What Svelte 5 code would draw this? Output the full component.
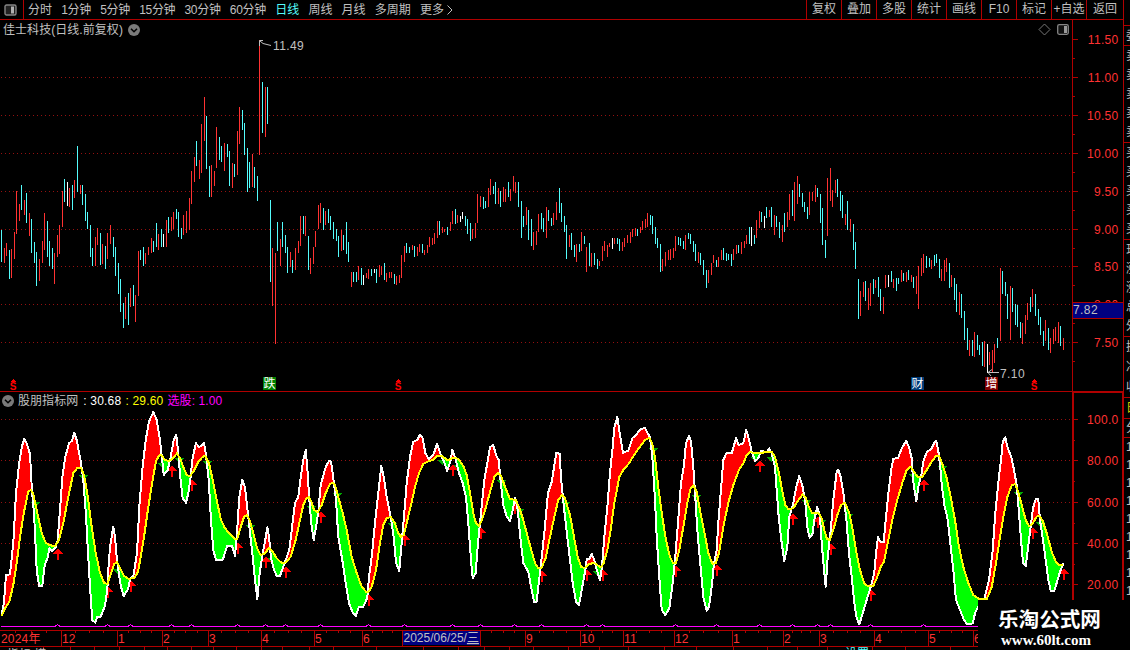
<script lang="ts">
  // Daily K-line screen: toolbar, price bars, trend oscillator and time axis.
  // Both charts share one pixel coordinate space (the window's own), so bar
  // and curve data are stored as screen coordinates.

  const periods = ['分时', '1分钟', '5分钟', '15分钟', '30分钟', '60分钟', '日线', '周线', '月线', '多周期', '更多'];
  const actions = ['复权', '叠加', '多股', '统计', '画线', 'F10', '标记', '+自选', '返回'];

  // ── price bars: x,top,bottom ──
  const up = `4,248,263 6,243,256 11,249,278 14,232,259 16,191,234 19,204,221 24,200,215 29,213,236 39,259,281 42,241,263
    44,213,250 54,253,284 57,235,257 59,225,254 62,191,227 69,188,207 74,180,198 80,185,194 95,237,266 97,228,245
    102,244,264 107,233,259 110,225,244 125,297,319 130,288,307 135,295,322 138,251,296 145,253,264 148,247,255 151,238,253
    158,234,250 166,220,247 171,217,231 173,212,229 183,215,235 186,211,233 189,198,230 191,171,204 194,157,182 199,160,179
    201,124,173 204,97,141 211,165,197 214,171,186 216,127,168 224,143,171 232,163,188 237,131,175 239,107,144 252,154,187
    259,40,155 265,87,137 272,248,306 275,253,344 280,239,266 290,252,267 295,248,270 298,241,253 300,216,246 305,216,236
    310,258,274 313,247,264 315,231,247 318,205,229 320,203,223 325,211,225 341,230,251 351,272,287 358,266,280 366,273,278
    368,269,279 379,265,277 381,266,275 386,273,282 389,272,278 391,272,278 396,276,285 399,275,283 401,255,278 404,246,262
    412,245,250 417,247,256 419,244,252 424,250,255 427,245,253 429,237,247 432,238,245 434,233,244 437,221,238 442,227,233
    444,229,232 450,222,231 452,211,224 457,215,223 472,229,239 475,223,238 477,194,223 480,196,207 488,188,207 490,179,195
    498,188,204 503,187,202 505,189,202 510,189,201 513,176,191 515,182,193 526,207,225 533,232,250 536,231,245 538,214,232
    546,207,238 553,213,225 556,202,220 569,235,247 576,244,262 581,232,251 586,247,272 591,253,267 599,261,266 602,246,261
    604,241,251 607,245,257 609,243,247 614,238,244 622,242,251 624,238,247 627,235,243 630,232,243 632,229,237 635,228,236
    640,227,233 642,221,230 645,219,228 647,213,227 662,259,271 665,252,266 668,250,260 670,249,260 673,248,258 675,236,251
    685,235,250 698,252,263 708,270,283 711,263,275 713,255,263 718,257,267 721,250,260 733,249,260 736,245,254 741,242,254
    744,241,248 746,235,244 756,220,238 759,211,228 769,210,217 774,215,235 782,225,242 787,212,227 789,194,220 794,182,221
    797,176,204 809,192,215 812,192,201 815,185,202 827,178,236 830,168,201 832,190,207 835,180,193 845,214,225 850,219,232
    860,291,316 863,282,297 868,288,310 870,283,306 875,280,288 883,297,314 885,275,288 893,279,288 901,270,282 906,272,282
    911,275,282 916,276,294 918,266,309 921,258,276 923,254,273 931,260,269 941,269,281 944,260,281 946,258,272 951,275,287
    959,292,315 969,340,356 974,332,357 984,341,367 989,352,365 992,350,372 994,344,363 1000,268,341 1010,286,340
    1022,323,344 1025,315,334 1027,303,320 1032,289,307 1045,320,341 1050,338,353 1053,329,344 1055,327,341 1058,322,343 1063,338,350`;

  const down = `1,230,262 9,250,279 21,185,210 26,193,223 31,219,253 34,242,263 36,252,286 47,221,257 49,241,266 52,248,269
    64,179,202 72,185,210 77,146,192 82,185,205 85,194,221 87,212,229 90,225,257 92,248,266 100,233,265 105,246,269
    113,237,257 115,247,276 118,263,294 120,279,312 123,303,328 128,293,325 133,285,306 140,250,260 143,247,266 153,241,252
    156,223,247 161,229,247 168,217,233 176,209,219 178,212,237 181,228,239 196,141,166 206,116,169 209,166,197 219,137,160
    221,146,162 227,144,157 229,151,186 234,164,177 242,110,130 244,123,155 247,148,192 249,162,188 254,167,188 257,176,201
    262,82,133 267,87,124 270,200,282 277,222,251 282,222,247 285,235,253 287,247,273 292,260,273 303,216,234 308,236,270
    323,208,230 328,209,223 330,216,230 333,222,239 336,229,241 338,236,257 343,235,250 346,222,254 348,242,262 353,272,282
    356,272,282 361,268,285 371,269,276 376,269,283 384,263,280 394,274,284 406,243,253 409,247,253 414,246,257 422,244,253
    439,221,235 447,227,235 455,209,224 465,216,226 467,219,234 470,223,241 483,197,209 485,201,208 493,186,194 495,182,204
    500,191,207 508,182,197 518,182,207 521,201,238 523,216,227 528,210,240 531,219,246 541,213,229 543,218,232 548,210,221
    551,218,226 559,188,213 561,203,222 564,216,232 566,225,259 571,233,250 574,245,257 579,244,252 584,236,244 589,243,266
    594,253,265 597,259,269 617,238,244 619,239,251 637,229,236 650,215,225 652,216,234 655,227,244 657,238,248 660,244,272
    678,237,245 680,238,246 683,241,249 688,233,239 690,234,244 693,241,252 695,244,261 700,253,265 703,260,275 706,270,288
    716,260,267 723,248,260 726,253,261 728,254,260 731,254,266 738,245,253 749,227,244 754,235,244 761,212,222 766,207,218
    771,207,227 776,216,227 779,222,238 784,213,232 792,190,216 799,184,197 802,193,207 804,202,212 807,207,219 817,188,197
    820,194,223 822,208,245 825,240,258 837,179,197 840,191,211 842,195,218 847,201,230 853,224,250 855,242,269 858,279,319
    865,281,301 873,279,294 878,277,297 880,289,311 891,271,282 896,278,291 898,278,284 903,273,281 908,270,280 913,277,288
    926,256,268 929,258,267 934,255,266 936,254,263 939,259,278 949,263,288 954,278,300 956,284,312 961,294,318 964,311,340
    967,328,350 972,340,356 977,335,350 979,345,355 982,342,366 997,338,348 1002,271,294 1005,282,296 1007,294,319
    1012,288,312 1015,304,325 1017,305,327 1020,322,338 1030,297,312 1035,294,316 1038,309,325 1040,317,335 1043,331,346
    1048,328,350 1060,326,346`;

  const flat = `67,182,206 163,234,247 363,275,285 374,269,273 460,216,222 462,212,219 612,238,249 751,227,246 764,216,228
    888,275,287 987,344,373`;

  // ── oscillator curves: x,y knots ──
  const fastKnots = `1.7,615 4,602 6,575 10,574.3 13.3,543 16,493 19.3,462 22,446 24.3,439 26.3,442 30,454 31,472 32,492 34,513
    35,533 36.7,570 39,585.7 42.3,585.7 44.7,565 48,556.7 49.3,548.3 52,550.7 55.3,548.3 57.7,540 60,510 62.3,478 65,458
    69,443.3 72,440.7 74.3,432.7 76.7,440 81,463 83.3,480 86,515 88,553 90.7,597 92.3,620 95.3,622.7 97.3,616.7 100.7,616.7
    105,605.7 107.3,590 108.3,570 110,547 113.3,526.7 115,536.7 116.7,557 118.7,573 121,586.7 123.7,596 128,589.3 130,579.3
    133.3,576 137,553.3 139.3,507 142.3,470 145.7,440 149,421.7 153.3,412 156.7,420 160,440 162,458.3 163.7,475 167.7,470
    170.7,457 173.7,440 176.3,435 178.3,453.3 180.3,476.7 182.7,498.3 186,502.7 188.3,493.3 190.3,480 192.7,457 196,443.3
    199.3,447.3 204,442.7 206,455 208.7,480 211,520 213.3,550 216,560 222.7,560 227.3,545.7 232,545.7 235,555.7 237,533
    239.3,497 242.3,480 245,487 247,505 250,533 252.3,553 254.7,577 257.3,599 259.7,573 262.7,553 265,541.7 267.3,527.3
    269,536.7 271,558.3 274,570 276.7,575.7 280,575.7 284.7,563 289.3,550 291.7,530 295,503 298.3,497 300.7,478 303.3,460
    305.7,450 307.7,473 309.3,500 311.7,527 313.7,540 316,527 318.3,512 320.7,485 325.7,467 329,461 331,461.7 333.3,478
    336,500 338.3,537 342.3,560 345.7,583 349,603 352.3,611.7 355.7,616 358.7,607.3 363.3,606.7 367.3,598 369,577
    371.7,557 375,523 378.3,493 381.3,466 384,478 386.7,497 391,518 393.7,537 396,563 399.3,571 401.3,547 404,517
    406.7,483 410,457 413.3,441.7 417.3,440 420,434.7 422.7,438.3 425.3,453 428.7,459.3 433.3,455 437,444 440.3,453.3
    444,461.7 447.3,471 450.3,461.7 452.3,450 455.3,458 459,473 462.7,483 466,497 468.3,523 471,560 472.7,578.3
    475.7,573 478,543 481,513 484.3,480 487.3,463 490,447.3 493.3,445 496,455 498.7,460 500.7,482 503.3,505 506.7,516.7
    510,521 512.7,510 515.3,497.7 517.7,510 520.3,537 523.3,563 528.3,571.7 531.7,590 534,601.7 536.7,601.7 538.7,583
    540.7,567 544.3,533 548,493 551.7,482 556.3,452.7 559.7,454 561,478 564,508 567.3,537 570,560 572.7,583 576,601.7
    579,605 581.7,590 585.7,568 586.7,559.3 589.3,559.3 591.7,554 594,559.3 597.3,571.7 600,580 602,567 604.3,537
    607.7,503 610,473 612.7,447 614.3,428 617.3,416.7 619.7,433 623,452.7 628.3,450.7 632.3,438.3 636.7,434 640.7,428.7
    645.3,428.3 647.7,433.3 650,437.3 652.3,457 655,500 656.7,537 659.3,577 661.7,610 665.3,615.3 669.3,608.3 672.7,583
    675,560 678,523 681,483 683.7,467 686,443.3 689,436 691,441.7 693.3,467 695.3,497 697.3,530 700,560 703.3,597
    706.7,610.7 709,606.7 711.7,587 714,563.3 716.7,550 718.3,523 720.7,493 723.3,460 726.3,453.3 731.7,453.3 736,438.3
    738.7,445 743.3,443.3 746.3,430 748.7,438.3 751.7,451.7 755.3,461 758.3,458.3 761,450.7 766.7,452.3 769.3,448.3
    771.7,453.3 775,467 776.7,490 778.7,517 781.3,540 784.3,561 787.3,547 789.3,517 793.3,503 796,488 799.3,476
    802.7,487 805.3,503 807.7,530 809.7,537.7 812.3,535 814.7,518 817.3,507 820,517 821.7,543 824,570 825.7,586.7
    827.7,557 830.7,530 833.3,500 836.7,471.7 838.3,470 840.7,477 844,497 846.7,523 849,553 851.7,577 854.3,603
    856.7,618.3 859.3,624.3 862.7,613.3 866.7,600 870.7,587 874.3,573 876,553 878,537 880.7,542.3 883.7,542.3 886,517
    888.7,490 891.7,467 893.3,459 898.3,457.7 901.7,448.3 906.3,440.7 909.3,448.3 911.7,458.3 913,480 916.3,501
    918.7,485 921.3,475 923.7,460 927,451.7 931,449.3 934,443.3 936.3,441 938.7,453.3 940.3,468 942,487 944.7,507
    947.3,517 950,540 953.3,570 956,600 960.7,611.7 964,620 967.3,624.3 972.7,623.3 975,613.3 978,606.7 984.3,599.3
    989,580 992.7,550 995.3,513 998.3,483 1001.7,453.3 1002.7,441.7 1005.3,437.3 1007.7,448.3 1011.3,456.7 1014,470
    1016.7,485 1019,513 1021.3,543 1023,563 1025.7,566 1027.7,550 1030.7,527 1033,508 1035.7,499.3 1038.3,499.3
    1040,520 1043,540 1045.7,560 1048.3,580 1050.7,590.7 1054.3,590.7 1056.7,583 1060,571.7 1063.7,562.7`;

  const slowKnots = `1.7,616 5,608.3 9.3,601.7 13.3,585 16.7,563 20,537 24,512 28.3,491.7 31,490 33.3,494 37.3,513 41.7,533
    45.7,542.7 50,545.3 55,546 59,540 63.3,523 68.3,497 73.3,473 77.3,468 81,467.7 84,475 87.3,493 91.7,527 95.7,553
    100,573 104,582.7 107.3,584 111,573.3 114.3,564 117,562 120,568.3 124,576 128.3,578.7 134.3,578.3 138,571.7 140.7,557
    144,537 148.3,507 152.7,480 156,461 159.3,455.3 161.7,455.3 165,460 168.3,461 172.3,459 177,453.3 180,458.3 183.3,467
    186.7,475 189.7,476.3 193.3,471.7 198.3,461.7 202.7,456.7 205.3,456 209,463.3 212.3,478 216.7,500 221,520 225,528.3
    230,534 235,538.7 237.3,538.7 240.7,527 244,517 246.7,515 249.3,519 253.3,533 257,548 260.3,554.7 264.3,554.3
    269,547.7 272.7,551.7 276.7,558.3 281.7,563 286,562.3 290.7,556.7 295.7,540 300,520 303.3,505 306,499 308.7,497
    311.3,501.7 314,510 317.7,512.3 321.7,505 325.7,493 330,484 332.3,482.7 335,485 338.3,497 342.7,513 346.7,530
    351.7,557 356.7,573 361.7,586.7 366,591.7 368.7,591.7 371.7,586.7 376,570 380,543 383.3,525 386.7,518.3 391,517
    395,523.3 398.3,533 401,537 403.7,535 406.7,523 411,505 415,487 419,473 423.3,464 428.3,461.3 433.3,460 437.3,456
    441.7,456 447.7,460.3 453.3,457.7 458.3,458.7 463.3,466 466.7,475 470,493 473.3,513 476,523.3 478.7,526 482,520
    486,507 490,492 494.3,477 498.3,472.7 501.7,477.3 505,487 510,499 515.7,500 519,507 522.7,518 526.7,533 530.7,548
    535,563 538.3,568.3 541.7,567.7 545.7,558 550,537 554.3,517 558.3,500 562,495 565,498.3 570,515 574,537 577.7,557
    581,566.7 584.3,568 589,564.3 594,562.7 597.3,565 600.7,567.3 603.7,563.3 607.3,550 610.7,530 614,505 619.3,477
    623.3,470 629,463.3 634,455 640,446.7 645,440 649.3,438 652,442.7 655,457 658.3,487 662.3,517 666,540 670,557
    673.3,563.3 676,562.7 679.3,550 683.3,527 687.3,503 690.7,488 693.3,485.3 696.7,492 700,510 704,530 708.3,553
    712.3,563.7 715.7,563.3 719,553 723.3,527 728.3,503 733.3,485 739,470 743.3,463.3 746.7,455 750,452 754.3,453.3
    760,453.3 765.7,452 771.7,452 775,456.7 778.7,472 782.7,493 785.3,505 788.3,509 793.3,508.3 797.3,501.7 802.7,494.3
    806,498.3 809,507.3 812.3,513.3 818.3,512.7 821.7,518.3 824.3,530 827,539 829.7,540 833.3,530 837.3,515 841,505
    845,502.7 849.3,513 852.7,530 856,550 860,570 864.3,583.3 867.7,586 873.3,586 877.3,577 880.7,567 884,561.7
    888.3,540 892.7,518 897.3,500 902.3,483 906.7,470 910.7,466.7 914,471.7 917.7,477 922.3,476.7 926.7,470 931.7,461.7
    936,456 939,456 942.7,465 946.7,478 950.7,497 955,520 959,547 963.3,567 968.3,583 973.3,595 980,599.3 986.7,599.3
    991.7,587 996,563 1000,537 1003.3,517 1007.3,497 1011.7,485.3 1015,484 1018.3,492 1021.7,505 1025.7,520 1029,526
    1032.3,524 1036.7,516.7 1039.3,515.7 1042.3,520 1046.7,533 1051.7,551.7 1056,562.3 1059,565 1063.3,564.7`;

  const parse = (s: string) => s.trim().split(/\s+/).map((t) => t.split(',').map(Number));

  const barPath = (s: string) => parse(s).map(([x, a, b]) => `M${x} ${a}h1V${b}h-1z`).join('');

  function sample(knots: number[][], x: number) {
    const i = knots.findIndex((k) => k[0] >= x);
    if (i === 0) return knots[0][1];
    if (i < 0) return knots[knots.length - 1][1];
    const [x0, y0] = knots[i - 1];
    const [x1, y1] = knots[i];
    return y0 + ((y1 - y0) * (x - x0)) / (x1 - x0);
  }

  const fast = parse(fastKnots);
  const slow = parse(slowKnots);

  // one pixel column per x; red while fast is above slow, green below
  let redFill = '';
  let greenFill = '';
  for (let x = 2; x < 1064; x++) {
    const f = sample(fast, x + 0.5);
    const s = sample(slow, x + 0.5);
    const col = `M${x} ${f.toFixed(1)}h1V${s.toFixed(1)}h-1z`;
    if (f < s) redFill += col;
    else greenFill += col;
  }

  // buy signals: x, arrow tip y
  const buys = [
    [58, 548], [108, 586], [131, 580], [172, 465], [192, 479], [238, 542], [266, 556], [286, 566], [321, 511],
    [369, 594], [405, 534], [453, 464], [481, 527], [515, 502], [542, 570], [587, 569], [603, 569], [676, 565],
    [717, 564], [760, 460], [793, 513], [818, 516], [831, 543], [871, 589], [924, 479], [1033, 527], [1064, 568]
  ];
  const sells = [
    [35, 502], [83, 475], [117, 569], [162, 463], [179, 458], [207, 461], [250, 525], [271, 558], [311, 506],
    [337, 493], [392, 523], [442, 460], [456, 465], [501, 480], [519, 509], [565, 502], [597, 571], [653, 448],
    [696, 495], [755, 457], [771, 457], [806, 500], [821, 520], [848, 514], [913, 474], [942, 466], [1018, 492], [1040, 522]
  ];
  const signalLine =
    'M1 626.5' + buys.filter(([x]) => x < 978).map(([x]) => `H${x - 3}l2.5 -2l2.5 2`).join('') + 'H978';

  const prices = [
    ['11.50', 39], ['11.00', 77], ['10.50', 115], ['10.00', 153], ['9.50', 191],
    ['9.00', 229], ['8.50', 266], ['8.00', 304], ['7.50', 342]
  ] as [string, number][];
  const levels = [['100.0', 419], ['80.00', 460], ['60.00', 502], ['40.00', 543], ['20.00', 584]] as [string, number][];

  const months = [
    ['2024年', 0], ['12', 61], ['1', 117], ['2', 162], ['3', 208], ['4', 261], ['5', 314], ['6', 362], ['', 402], ['', 480],
    ['9', 525], ['10', 580], ['11', 623], ['12', 674], ['1', 732], ['2', 783], ['3', 819], ['4', 874], ['5', 928], ['6', 973]
  ] as [string, number][];
  const minorTicks = months.slice(0, -1).flatMap(([, x], i) => {
    const w = months[i + 1][1] - x;
    return [0.25, 0.5, 0.75].map((k) => Math.round(x + w * k));
  });
  const lowerTicks = [
    43, 70, 94, 119, 144, 167, 191, 213, 236, 261, 282, 309, 333, 376, 423, 458, 484, 509, 533, 568, 599, 628, 664,
    696, 733, 767, 797, 827, 872, 905, 950
  ];

  const dividends = [13, 398, 1034];
  const badges = [
    { x: 263, text: '跌', fill: '#008000' },
    { x: 911, text: '财', fill: '#003c78' },
    { x: 985, text: '增', fill: '#800000' }
  ];

  const quoteGroups = [
    { h: 20, rows: ['委'] },
    { h: 97, rows: ['卖', '卖', '卖', '卖', '卖'] },
    { h: 97, rows: ['买', '买', '买', '买', '买'] },
    { h: 97, rows: ['现', '涨', '涨', '总', '外'] },
    { h: 61, rows: ['换', '净', '收'] }
  ];
</script>

{#snippet more()}
  <svg class="more" width="12" height="12" viewBox="0 0 12 12">
    <circle cx="6" cy="6" r="6" fill="#7a7a7a" />
    <path d="M3 4.7L6 7.7L9 4.7" fill="none" stroke="#000" stroke-width="1.6" />
  </svg>
{/snippet}

<div class="screen">
  <div class="main">
    <header class="toolbar">
      <div class="pane-toggle">
        <svg width="13" height="12" viewBox="0 0 13 12">
          <rect x="1" y="1" width="11" height="10" rx="1.5" fill="#222" stroke="#858585" stroke-width="1.4" />
          <rect x="7" y="2.5" width="3" height="7" fill="#b0b0b0" />
        </svg>
      </div>
      <nav class="periods">
        {#each periods as p}
          <span class:active={p === '日线'} class:minutes={p.endsWith('分钟')}>{p}</span>
        {/each}
        <svg class="arrow" width="7" height="10" viewBox="0 0 7 10">
          <path d="M1.5 .5L6 5L1.5 9.5" fill="none" stroke="#c0c0c0" />
        </svg>
      </nav>
      <nav class="actions">
        {#each actions as a}
          <span>{a}</span>
        {/each}
      </nav>
    </header>

    <section class="panel">
      <div class="title">
        <span>佳士科技(日线.前复权)</span>
        {@render more()}
      </div>
      <svg width="1123" height="372" viewBox="0 20 1123 372">
        <g class="crisp">
          {#each prices.slice(1) as [, y]}
            <line class="grid" x1="1" x2="1072" y1={y + 0.5} y2={y + 0.5} />
          {/each}
          <path d={barPath(up)} fill="#ff3232" />
          <path d={barPath(down)} fill="#54fcfc" />
          <path d={barPath(flat)} fill="#fff" />
          <path class="frame" d="M0 391h1123v1h-1123zM1072 20h1v372h-1z" />
          {#each prices as [, y]}
            <path class="frame" d="M1073 {y}h5v1h-5zM1073 {y + 19}h2v1h-2z" />
          {/each}
        </g>
        {#each prices as [label, y]}
          <text class="scale" x="1118.5" y={y + 5}>{label}</text>
        {/each}

        <rect class="crisp" x="1073" y="302" width="50" height="17" fill="#b00000" />
        <rect class="crisp" x="1073" y="303" width="50" height="15" fill="#000080" />
        <text class="note" x="1073" y="314">7.82</text>

        <path class="pointer" d="M259.5 46V40.5H263M260 41L263 43.5L271 45.5" />
        <text class="note" x="273" y="50">11.49</text>
        <path class="pointer" d="M999 372.5H988M992 369.5L988 372.5L991 376" />
        <text class="note" x="1000" y="378">7.10</text>

        <path d="M1044.5 24L1050 29.5L1044.5 35L1039 29.5Z" fill="none" stroke="#777" />
        <rect x="1057.7" y="24.7" width="10.6" height="9.6" rx="1.5" fill="#111" stroke="#858585" stroke-width="1.3" />
        <rect x="1064" y="26" width="3" height="7" fill="#999" />

        {#each dividends as x}
          <path class="crisp" d="M{x} 379l3 3h-6z" fill="#f00" />
          <text class="dividend" {x} y="390">S</text>
        {/each}
        {#each badges as b}
          <rect x={b.x} y="377" width="13" height="13" fill={b.fill} />
          <text class="badge" x={b.x + 6.5} y="388">{b.text}</text>
        {/each}
      </svg>
    </section>

    <section class="panel">
      <div class="title indicator">
        {@render more()}
        <span>股朋指标网</span>
        <span class="fast">: 30.68</span>
        <span class="slow">: 29.60</span>
        <span class="pick">选股: 1.00</span>
      </div>
      <svg width="1123" height="238" viewBox="0 392 1123 238">
        <g class="crisp">
          {#each levels as [, y]}
            <line class="grid" x1="1" x2="1072" y1={y + 0.5} y2={y + 0.5} />
          {/each}
          {#each sells as [x, y]}
            <path d="M{x - 4} {y}h9l-4.5 5z" fill="#00a800" />
          {/each}
          {#each buys as [x, y]}
            <path d="M{x} {y}l5 6h-4v6h-2v-6h-4z" fill="#f00" />
          {/each}
          <path d={redFill} fill="#f00" />
          <path d={greenFill} fill="#0f0" />
          <polyline class="curve" points={fastKnots} stroke="#fff" />
          <polyline class="curve" points={slowKnots} stroke="#ff0" />
          <path d={signalLine} fill="none" stroke="#f0f" />
          <path class="frame" d="M1072 392h51v1h-51zM1072 392h2v238h-2zM1122 392h1v238h-1z" />
          {#each levels as [, y]}
            <path class="frame" d="M1074 {y}h4v1h-4zM1074 {y + 21}h1v1h-1z" />
          {/each}
        </g>
        {#each levels as [label, y]}
          <text class="scale" x="1118.5" y={y + 5}>{label}</text>
        {/each}
      </svg>
    </section>

    <footer class="timeline">
      <svg width="1123" height="20" viewBox="0 630 1123 20">
        <g class="crisp">
          <path class="frame" d="M0 630h1123v1H0zM0 646h1123v1H0z" />
          {#each minorTicks as x}
            <rect class="frame" {x} y="631" width="1" height="2" />
          {/each}
          {#each months.slice(1) as [, x]}
            <rect class="frame" {x} y="631" width="1" height="15" />
          {/each}
          {#each lowerTicks as x}
            <rect class="frame" {x} y="647" width="1" height="3" />
          {/each}
          <rect x="403" y="631" width="77" height="14" fill="#000080" />
        </g>
        {#each months as [label, x]}
          <text class="month" x={x + 1} y="643">{label}</text>
        {/each}
        <text class="date" x="403.5" y="642">2025/06/25/<tspan text-decoration="underline">三</tspan></text>
        <text class="date" x="7" y="659">指标  模</text>
        <text x="845" y="658" fill="#54fcfc">设置</text>
      </svg>
    </footer>
  </div>

  <aside class="quotes">
    {#each quoteGroups as g}
      <div class="group" style:height="{g.h}px">
        {#each g.rows as r}<span>{r}</span>{/each}
      </div>
    {/each}
    <div class="group tab" style:height="21px"><span>日</span></div>
    <div class="group" style:height="19px"><span>分</span></div>
    <div class="ticks">
      {#each Array(9) as _}<span>1</span>{/each}
    </div>
  </aside>

  <div class="watermark">
    <strong>乐淘公式网</strong>
    <span>www.60lt.com</span>
  </div>
</div>

<style>
  :global(body) {
    background: #000;
    overflow: hidden;
  }

  .screen {
    position: relative;
    display: grid;
    grid-template-columns: 1123px 7px;
    width: 1130px;
    height: 650px;
    overflow: hidden;
    background: #000;
    color: #c0c0c0;
    font: 12px/14px 'Liberation Sans', 'Noto Sans CJK SC', sans-serif;
    white-space: nowrap;
  }

  svg {
    display: block;
  }

  /* ── toolbar ── */
  .toolbar {
    display: flex;
    height: 19px;
    line-height: 18px;
    border-bottom: 1px solid #b00000;
  }
  .pane-toggle {
    display: flex;
    align-items: center;
    width: 19px;
    padding-left: 4px;
    border-right: 1px solid #b00000;
  }
  .periods {
    display: flex;
    align-items: center;
    gap: 9.2px;
    padding-left: 4px;
    flex: 1;
  }
  .periods .active {
    color: #54fcfc;
  }
  .periods .minutes {
    letter-spacing: -0.3px;
  }
  .periods .arrow {
    margin-left: -7px;
  }
  .actions {
    display: flex;
    line-height: 19px;
  }
  .actions span {
    display: flex;
    justify-content: center;
    width: 34px;
    border-left: 1px solid #b00000;
  }
  .actions span:last-child {
    width: 36px;
  }

  /* ── chart panels ── */
  .panel {
    position: relative;
  }
  .title {
    position: absolute;
    left: 3px;
    top: 3px;
    display: flex;
    align-items: center;
    gap: 5px;
    letter-spacing: 0.05px;
  }
  .title.indicator {
    left: 2px;
    top: 2px;
    gap: 4px;
  }
  .title.indicator .slow {
    color: #ff0;
    letter-spacing: 0.2px;
  }
  .title.indicator .fast {
    color: #fff;
    margin-left: 1px;
    letter-spacing: 0.2px;
  }
  .title.indicator .pick {
    color: #f0f;
    letter-spacing: 0.1px;
  }

  .crisp {
    shape-rendering: crispEdges;
  }
  .grid {
    stroke: #941010;
    stroke-dasharray: 1 3;
  }
  .frame {
    fill: #b00000;
  }
  .curve {
    fill: none;
    stroke-width: 2;
    stroke-linejoin: round;
  }
  .pointer {
    fill: none;
    stroke: #c0c0c0;
  }
  .scale {
    fill: #ff3232;
    letter-spacing: 0.3px;
    text-anchor: end;
  }
  .note {
    fill: #c0c0c0;
    letter-spacing: 0.4px;
  }
  .date {
    fill: #c0c0c0;
  }
  .month {
    fill: #ff3232;
    letter-spacing: 0.2px;
  }
  .dividend {
    fill: #f00;
    font-size: 10px;
    font-weight: bold;
    text-anchor: middle;
  }
  .badge {
    fill: #fff;
    text-anchor: middle;
  }

  /* ── quote strip, cut off by the window edge ── */
  .quotes {
    overflow: hidden;
    padding-top: 25px;
    border-left: 1px solid #b00000;
  }
  .group {
    box-sizing: border-box;
    display: flex;
    flex-direction: column;
    justify-content: space-around;
    padding-left: 2px;
    border-top: 1px solid #b00000;
  }
  .tab {
    color: #d0d000;
  }
  .ticks {
    display: flex;
    flex-direction: column;
    padding-left: 2px;
    border-top: 1px solid #b00000;
    line-height: 18px;
  }

  .watermark {
    position: absolute;
    right: 0;
    bottom: 0;
    box-sizing: border-box;
    display: flex;
    flex-direction: column;
    width: 152px;
    height: 50px;
    padding: 3px 0 0 20px;
    background: #000;
    color: #fff;
  }
  .watermark strong {
    font: 700 20.6px/30px 'Noto Sans CJK SC', sans-serif;
  }
  .watermark span {
    padding-left: 3px;
    font: bold 15px/14px 'Liberation Serif', serif;
  }
</style>
